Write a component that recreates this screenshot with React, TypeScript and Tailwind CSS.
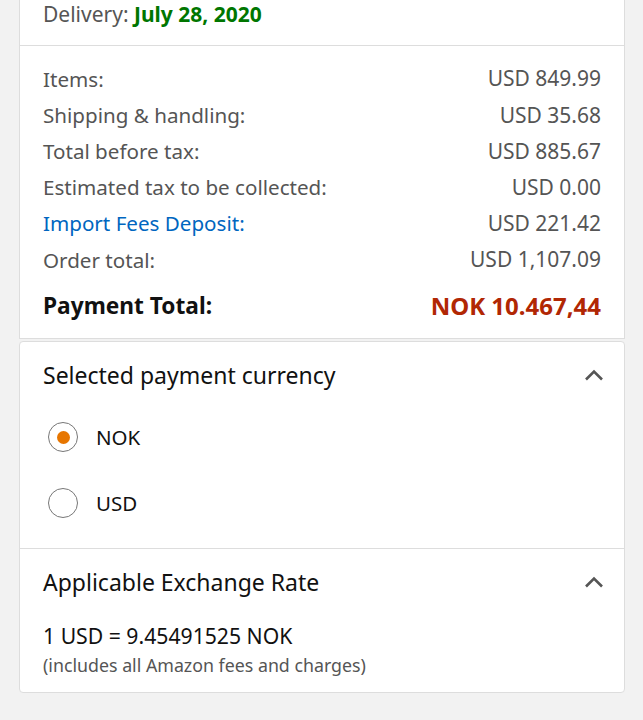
import React from "react";

const rows: { label: string; value: string; link?: boolean }[] = [
  { label: "Items:", value: "USD 849.99" },
  { label: "Shipping & handling:", value: "USD 35.68" },
  { label: "Total before tax:", value: "USD 885.67" },
  { label: "Estimated tax to be collected:", value: "USD 0.00" },
  { label: "Import Fees Deposit:", value: "USD 221.42", link: true },
  { label: "Order total:", value: "USD 1,107.09" },
];

function Chevron() {
  return (
    <svg width="20" height="12" viewBox="0 0 20 12" className="block">
      <path d="M2 10.5 L10 2.5 L18 10.5" fill="none" stroke="#555" strokeWidth="2.6" strokeLinecap="butt" strokeLinejoin="miter" />
    </svg>
  );
}

function Radio({ checked, label }: { checked: boolean; label: string }) {
  return (
    <div className="flex h-[66px] items-center">
      <div className="ml-[5px] flex h-[30px] w-[30px] items-center justify-center rounded-full border border-[#777] bg-white">
        {checked && <div className="h-[13px] w-[13px] rounded-full bg-[#e77600]" />}
      </div>
      <span className="ml-[18px] text-[20.5px] leading-[28px] text-[#111]">{label}</span>
    </div>
  );
}

export default function App() {
  return (
    <div
      className="min-h-[720px] w-full overflow-hidden bg-[#f2f2f2] px-[19px]"
      style={{ fontFamily: '"Noto Sans", "Open Sans", sans-serif' }}
    >
      <div className="w-[606px] border-x border-b border-[#ddd] bg-white">
        <div className="h-[46px] border-b border-[#ddd] px-[23px]">
          <div className="text-[21px] leading-[28px] text-[#555]">
            Delivery: <span className="font-bold text-[#007600]">July 28, 2020</span>
          </div>
        </div>
        <div className="px-[23px] pt-[15px] pb-[14px]">
          {rows.map((r) => (
            <div key={r.label} className="flex h-[36.2px] items-center justify-between">
              <span className={"text-[20.6px] " + (r.link ? "text-[#0066c0]" : "text-[#555]")}>{r.label}</span>
              <span className="text-[21px] text-[#555]">{r.value}</span>
            </div>
          ))}
          <div className="mt-[10px] flex h-[36px] items-center justify-between font-bold">
            <span className="text-[22.7px] text-[#111]">Payment Total:</span>
            <span className="text-[24px] text-[#b12704]">NOK 10.467,44</span>
          </div>
        </div>
      </div>
      <div className="mt-[2px] w-[606px] rounded-[4px] border border-[#ddd] bg-white">
        <div className="px-[23px] pt-[18px] pb-[12px]">
          <div className="flex h-[30px] items-center justify-between">
            <span className="text-[23px] text-[#111]">Selected payment currency</span>
            <div className="mr-[-3px]"><Chevron /></div>
          </div>
          <div className="mt-[14px]">
            <Radio checked label="NOK" />
            <Radio checked={false} label="USD" />
          </div>
        </div>
        <div className="border-t border-[#ddd] px-[23px] pt-[18px] pb-[15px]">
          <div className="flex h-[30px] items-center justify-between">
            <span className="text-[23px] text-[#111]">Applicable Exchange Rate</span>
            <div className="mr-[-3px]"><Chevron /></div>
          </div>
          <div className="mt-[25px] text-[21.2px] leading-[28px] text-[#111]">1 USD = 9.45491525 NOK</div>
          <div className="mt-[3px] text-[17.8px] leading-[24px] text-[#555]">(includes all Amazon fees and charges)</div>
        </div>
      </div>
    </div>
  );
}
